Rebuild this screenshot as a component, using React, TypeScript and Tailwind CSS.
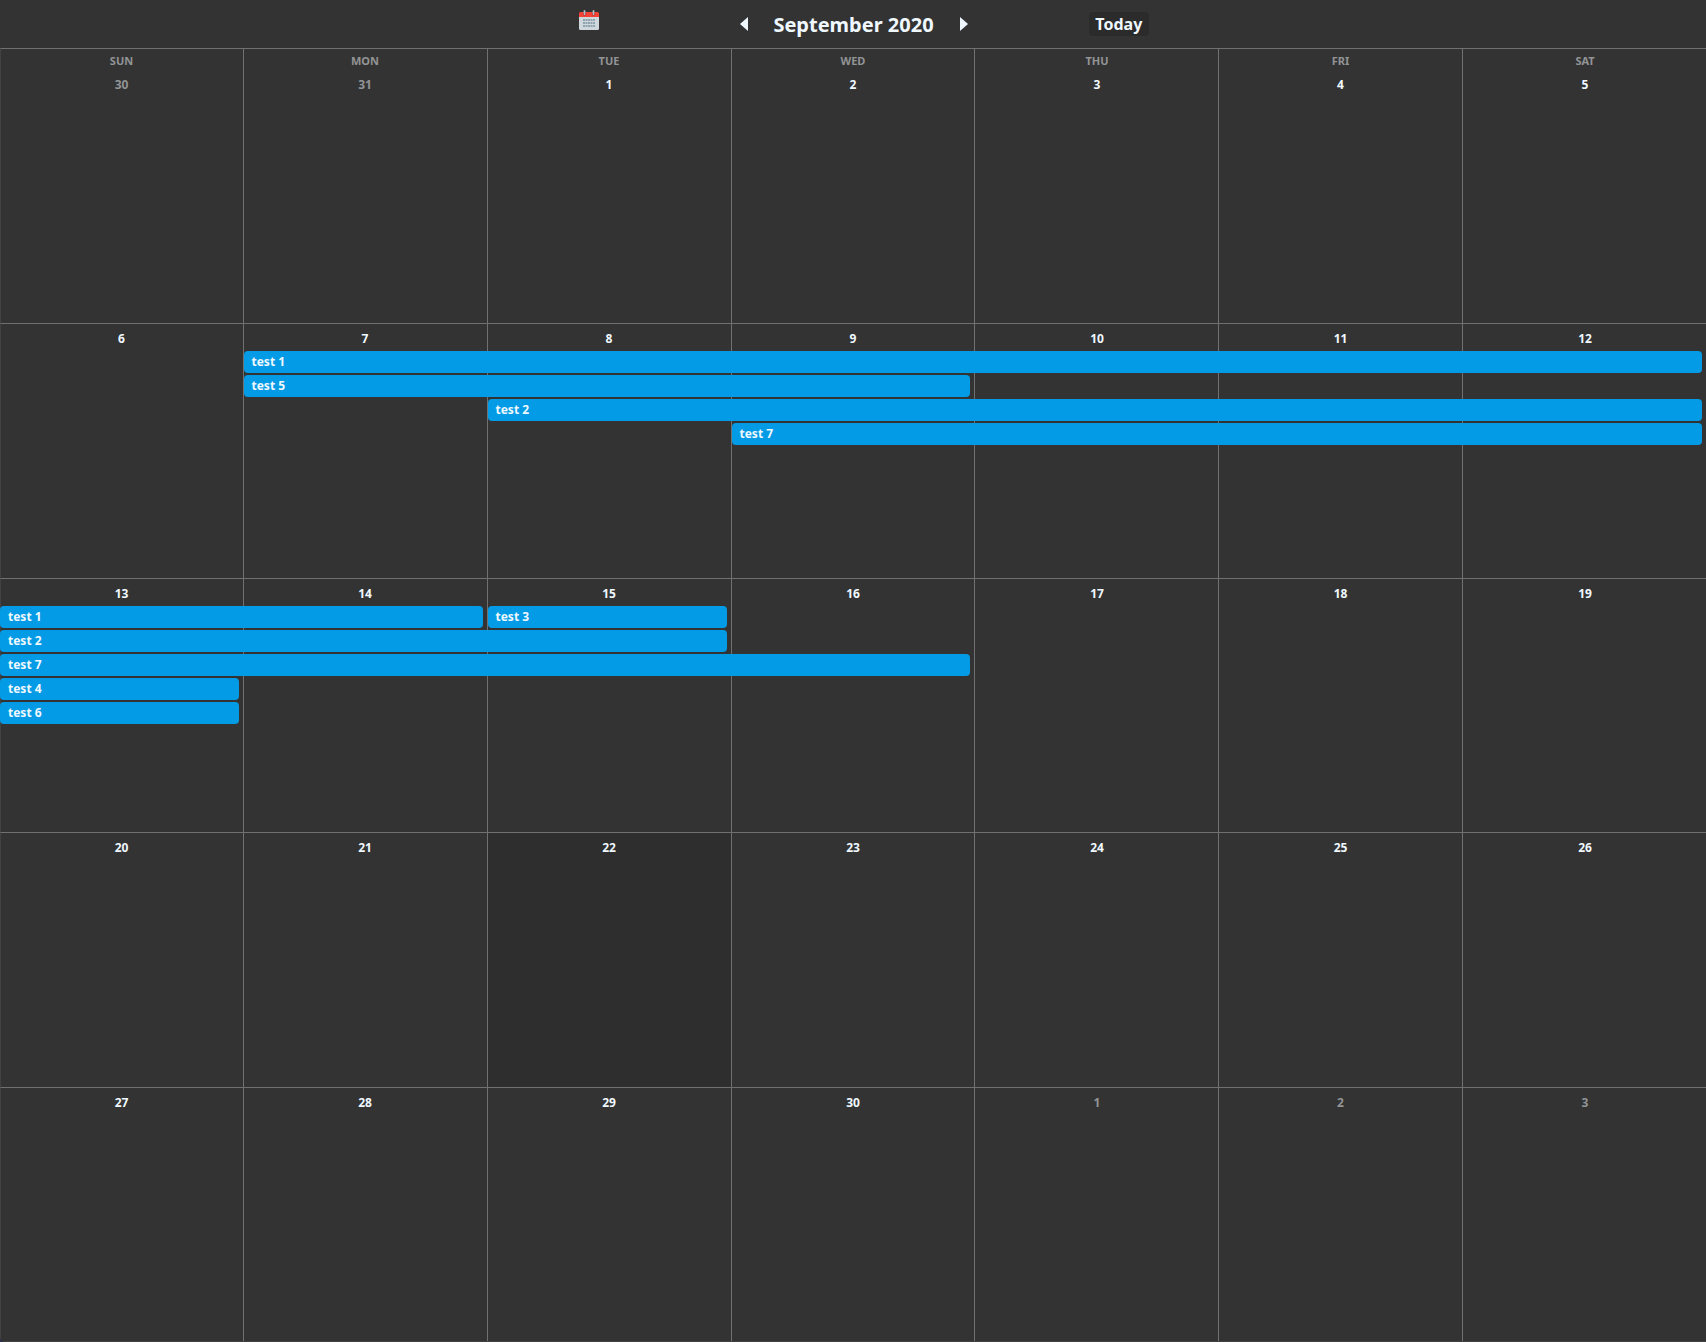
const weekdays = ['SUN', 'MON', 'TUE', 'WED', 'THU', 'FRI', 'SAT'];

type CalendarEvent = { title: string; place: string };
type Week = { days: number[]; muted: number[]; today?: number; events: CalendarEvent[] };

const weeks: Week[] = [
  { days: [30, 31, 1, 2, 3, 4, 5], muted: [0, 1], events: [] },
  {
    days: [6, 7, 8, 9, 10, 11, 12],
    muted: [],
    events: [
      { title: 'test 1', place: 'row-start-1 col-start-2 col-end-8' },
      { title: 'test 5', place: 'row-start-2 col-start-2 col-end-5' },
      { title: 'test 2', place: 'row-start-3 col-start-3 col-end-8' },
      { title: 'test 7', place: 'row-start-4 col-start-4 col-end-8' },
    ],
  },
  {
    days: [13, 14, 15, 16, 17, 18, 19],
    muted: [],
    events: [
      { title: 'test 1', place: 'row-start-1 col-start-1 col-end-3' },
      { title: 'test 3', place: 'row-start-1 col-start-3 col-end-4' },
      { title: 'test 2', place: 'row-start-2 col-start-1 col-end-4' },
      { title: 'test 7', place: 'row-start-3 col-start-1 col-end-5' },
      { title: 'test 4', place: 'row-start-4 col-start-1 col-end-2' },
      { title: 'test 6', place: 'row-start-5 col-start-1 col-end-2' },
    ],
  },
  { days: [20, 21, 22, 23, 24, 25, 26], muted: [], today: 2, events: [] },
  { days: [27, 28, 29, 30, 1, 2, 3], muted: [4, 5, 6], events: [] },
];

const columns = 'grid grid-cols-[243px_244px_244px_243px_244px_244px_244px]';

function CalendarIcon() {
  return (
    <svg width="20" height="21" viewBox="0 0 20 21">
      <path d="M0 7h20v11.5a1.5 1.5 0 0 1-1.5 1.5h-17A1.5 1.5 0 0 1 0 18.500z" fill="#cfd8dc" />
      <path d="M0 7V3.500A1.500 1.500 0 0 1 1.500 2h17A1.500 1.500 0 0 1 20 3.500V7z" fill="#f44336" />
      <circle cx="5.500" cy="3.900" r="1.700" fill="#b71c1c" />
      <circle cx="14.500" cy="3.900" r="1.700" fill="#b71c1c" />
      <path d="M5.500 1v3.300M14.500 1v3.300" stroke="#b0bec5" strokeWidth="1.800" strokeLinecap="round" />
      <path d="M4 10h12M4 13h12M4 16h12" stroke="#90a4ae" strokeWidth="2" strokeDasharray="2 0.500" />
    </svg>
  );
}

function WeekRow({ week, first }: { week: Week; first: boolean }) {
  return (
    <div className="relative">
      <div className={`${columns} h-full`}>
        {week.days.map((day, i) => (
          <div
            key={i}
            className={`flex flex-col items-center border-t border-l border-t-[#707070] text-[12px] leading-[16px] font-bold ${
              i === 0 ? 'border-l-[#424242]' : 'border-l-[#707070]'
            } ${i < 3 ? 'pr-px' : ''} ${i === 4 || i === 6 ? 'pl-px' : ''} ${
              week.today === i ? 'bg-[#2e2e2e]' : ''
            } ${week.muted.includes(i) ? 'text-[#929495]' : 'text-[#f0f8ff]'}`}
          >
            {first && (
              <span className="mt-1 -mb-1 text-[11px] leading-[16px] text-[#929495]">{weekdays[i]}</span>
            )}
            <span className={first ? 'mt-3' : 'mt-[7px]'}>{day}</span>
          </div>
        ))}
      </div>
      {/* Events span several days, so they lie over the day cells */}
      <div className={`${columns} absolute inset-x-0 top-[28px] auto-rows-[22px] gap-y-[2px]`}>
        {week.events.map((event) => (
          <div
            key={event.title}
            className={`${event.place} mr-1 rounded-[4px] bg-[#039be5] text-[12px] leading-[22px] font-bold text-[#f0f8ff] ${
              event.place.includes('col-start-1') ? 'pl-2' : 'ml-px pl-[7.5px]'
            }`}
          >
            {event.title}
          </div>
        ))}
      </div>
    </div>
  );
}

export default function App() {
  return (
    <div className="h-[1342px] w-[1706px] overflow-hidden bg-[#2f2f50] font-['Noto_Sans',sans-serif]">
      <div className="flex h-full flex-col overflow-hidden rounded-bl-[5px] bg-[#333333]">
        <header className="grid h-12 shrink-0 grid-cols-7 text-[#f0f8ff]">
          <button className="col-start-3 mt-[10px] ml-[92px] h-[21px] w-5" aria-label="Pick a date">
            <CalendarIcon />
          </button>
          <div className="col-start-4 flex items-center justify-between pr-[7px] pl-[9px]">
            <svg width="8" height="16" viewBox="0 0 8 16" fill="currentColor">
              <path d="M8 1v14L0 8z" />
            </svg>
            <h1 className="mt-[2px] mr-px text-[20px] leading-[46px] font-bold whitespace-nowrap">
              September 2020
            </h1>
            <svg width="8" height="16" viewBox="0 0 8 16" fill="currentColor">
              <path d="M0 1v14l8-7z" />
            </svg>
          </div>
          <div className="col-start-5 flex">
            <button className="mt-3 ml-[114px] h-6 w-[60px] rounded-[4px] bg-[#2b2b2b] text-[16px] leading-6 font-bold">
              Today
            </button>
          </div>
        </header>
        <main className="grid grid-rows-[275px_255px_254px_255px_254px] border-b border-b-[#424242]">
          {weeks.map((week, i) => (
            <WeekRow key={i} week={week} first={i === 0} />
          ))}
        </main>
      </div>
    </div>
  );
}
